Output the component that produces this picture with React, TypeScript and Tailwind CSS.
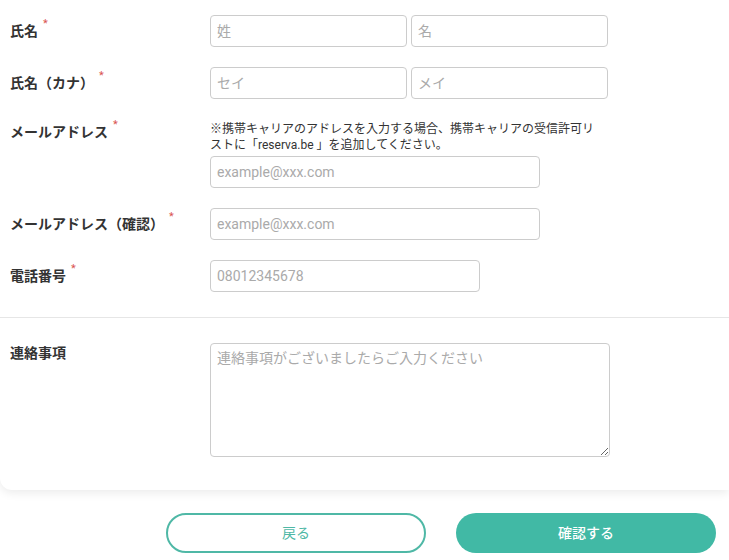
import React from "react";

const font = "font-['Roboto','Noto_Sans_CJK_JP',sans-serif]";

function Required() {
  return <span className="relative -top-[7px] ml-[5px] align-top text-[11px] leading-[32px] font-normal text-[#d9534f]">*</span>;
}

function Label({ children, required = true }: { children: React.ReactNode; required?: boolean }) {
  return (
    <div className="h-[32px] w-[200px] shrink-0 overflow-visible whitespace-nowrap text-[14px] font-bold leading-[32px] text-[#333]">
      {children}
      {required && <Required />}
    </div>
  );
}

const inputCls =
  "block h-[32px] rounded-[4px] border border-[#cccccc] bg-white px-[6px] text-[14px] text-[#333] outline-none placeholder:text-[#aaaaaa]";

export default function App() {
  return (
    <div className={`min-h-[560px] overflow-hidden bg-white ${font}`}>
      <div className="rounded-bl-xl bg-white pb-[33px] shadow-[0_3px_10px_rgba(0,0,0,0.08)]">
        <div className="px-[10px] pt-[15px]">
          <div className="flex">
            <Label>氏名</Label>
            <div className="flex gap-[4px]">
              <input className={`${inputCls} w-[197px]`} placeholder="姓" />
              <input className={`${inputCls} w-[197px]`} placeholder="名" />
            </div>
          </div>

          <div className="mt-[20px] flex">
            <Label>氏名（カナ）</Label>
            <div className="flex gap-[4px]">
              <input className={`${inputCls} w-[197px]`} placeholder="セイ" />
              <input className={`${inputCls} w-[197px]`} placeholder="メイ" />
            </div>
          </div>

          <div className="mt-[17px] flex">
            <Label>メールアドレス</Label>
            <div className="pt-[5px]">
              <p className="text-[12px] leading-[16px] text-[#333]">
                ※携帯キャリアのアドレスを入力する場合、携帯キャリアの受信許可リ
                <br />
                ストに「reserva.be 」を追加してください。
              </p>
              <input className={`${inputCls} mt-[3px] w-[330px]`} placeholder="example@xxx.com" />
            </div>
          </div>

          <div className="mt-[20px] flex">
            <Label>メールアドレス（確認）</Label>
            <input className={`${inputCls} w-[330px]`} placeholder="example@xxx.com" />
          </div>

          <div className="mt-[20px] flex">
            <Label>電話番号</Label>
            <input className={`${inputCls} w-[270px]`} placeholder="08012345678" />
          </div>
        </div>

        <div className="mt-[25px] h-px bg-[#e6e6e6]" />

        <div className="mt-[25px] flex px-[10px]">
          <div className="w-[200px] shrink-0 text-[14px] font-bold leading-[20px] text-[#333]">連絡事項</div>
          <textarea
            className="block h-[114px] w-[400px] rounded-[4px] border border-[#cccccc] bg-white px-[6px] py-[4px] text-[14px] leading-[20px] text-[#333] outline-none placeholder:text-[#aaaaaa]"
            placeholder="連絡事項がございましたらご入力ください"
          />
        </div>
      </div>

      <div className="mt-[23px] flex gap-[30px] pl-[166px]">
        <button
          type="button"
          className="h-[40px] w-[260px] rounded-full border-2 border-[#4fb8a6] bg-white text-[14px] text-[#4fb8a6]"
        >
          戻る
        </button>
        <button
          type="button"
          className="h-[40px] w-[260px] rounded-full bg-[#41b9a5] text-[14px] font-medium text-white"
        >
          確認する
        </button>
      </div>
    </div>
  );
}
